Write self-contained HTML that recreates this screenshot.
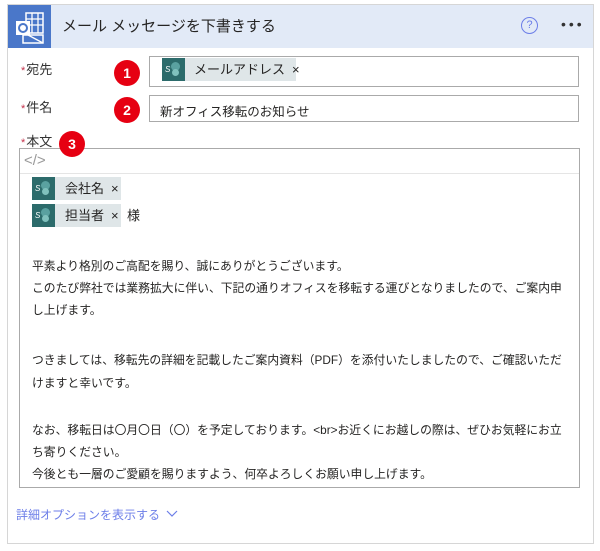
<!DOCTYPE html>
<html><head><meta charset="utf-8"><style>
*{margin:0;padding:0;box-sizing:border-box}
body{width:600px;height:551px;background:#fff;font-family:"Liberation Sans","Noto Sans CJK JP",sans-serif;color:#252423;position:relative;overflow:hidden}
.abs{position:absolute}
.card{left:7px;top:4px;width:587px;height:540px;border:1px solid #d6d6d6}
.hdr{left:8px;top:5px;width:585px;height:43px;background:#e2eaf7}
.logo{left:8px;top:5px;width:43px;height:43px;background:#4a77c9}
.lbl{font-size:13px;color:#333;line-height:16px}
.lbl b{color:#c4314b;font-weight:normal;font-size:11px;vertical-align:middle;margin-right:1px}
.box{border:1px solid #aaa;background:#fff}
.badge{width:26px;height:26px;border-radius:50%;background:#e60012;color:#fff;font-weight:bold;font-size:14px;text-align:center;line-height:26px}
.chip{height:23px;background:#dfe6e8;font-size:13px;line-height:23px;white-space:nowrap}
.chip i{display:inline-block;width:23px;height:23px;background:#2c6b6b;vertical-align:top;position:relative}
.chip i:before{content:"";position:absolute;left:9px;top:4px;width:9px;height:9px;border-radius:50%;background:#5aa1a0}
.chip i:after{content:"";position:absolute;left:10px;top:11px;width:7px;height:7px;border-radius:50%;background:#80c1bd}
.chip span.s{position:absolute;left:3px;top:0;font-size:8px;color:#fff;line-height:23px}
.t{font-size:11.8px;left:32px;white-space:nowrap;color:#252423}
</style></head><body>
<div class="abs card"></div>
<div class="abs hdr"></div>
<div class="abs logo">
<svg width="43" height="43" viewBox="0 0 43 43"><rect x="18" y="8" width="17" height="20" fill="none" stroke="#fff" stroke-width="1.5"/><path d="M18 14H35M18 20H35M24 8V28M30 8V28" stroke="#fff" stroke-width="1.3"/><path d="M15 30L35 30L35 38L15 38Z" fill="none" stroke="#fff" stroke-width="1.5"/><path d="M20 30L35 38" stroke="#fff" stroke-width="1.3"/><rect x="8" y="16" width="14" height="14" fill="#fff"/><circle cx="15" cy="23" r="4" fill="none" stroke="#4a77c9" stroke-width="2"/></svg>
</div>
<div class="abs" style="left:62px;top:15px;font-size:15px;color:#252423">メール メッセージを下書きする</div>
<div class="abs" style="left:521px;top:17px;width:17px;height:17px;border:1.5px solid #6c7ee8;border-radius:50%;color:#6c7ee8;font-size:11px;text-align:center;line-height:14px">?</div>
<div class="abs" style="left:561px;top:19px;font-size:14px;letter-spacing:3px;color:#333;line-height:10px">•••</div>

<div class="abs lbl" style="left:21px;top:62px"><b>*</b>宛先</div>
<div class="abs lbl" style="left:21px;top:100px"><b>*</b>件名</div>
<div class="abs lbl" style="left:21px;top:134px"><b>*</b>本文</div>

<div class="abs box" style="left:149px;top:56px;width:430px;height:31px"></div>
<div class="abs chip" style="left:162px;top:58px;width:134px"><i><span class="s">S</span></i><span style="margin-left:9px">メールアドレス</span><span style="margin-left:7px">×</span></div>
<div class="abs box" style="left:149px;top:95px;width:430px;height:27px"></div>
<div class="abs" style="left:160px;top:101px;font-size:12.5px">新オフィス移転のお知らせ</div>

<div class="abs box" style="left:19px;top:148px;width:561px;height:340px"></div>
<div class="abs" style="left:20px;top:173px;width:559px;height:1px;background:#e5e5e5"></div>
<div class="abs" style="left:24px;top:152px;font-size:15px;color:#999;font-family:'Liberation Sans',sans-serif;font-weight:300">&lt;/&gt;</div>
<div class="abs chip" style="left:32px;top:177px;width:89px"><i><span class="s">S</span></i><span style="margin-left:10px">会社名</span><span style="margin-left:7px">×</span></div>
<div class="abs chip" style="left:32px;top:204px;width:89px"><i><span class="s">S</span></i><span style="margin-left:10px">担当者</span><span style="margin-left:7px">×</span></div>
<div class="abs" style="left:127px;top:205px;font-size:13px">様</div>

<div class="abs t" style="top:257px">平素より格別のご高配を賜り、誠にありがとうございます。</div>
<div class="abs t" style="top:279px">このたび弊社では業務拡大に伴い、下記の通りオフィスを移転する運びとなりましたので、ご案内申</div>
<div class="abs t" style="top:301px">し上げます。</div>
<div class="abs t" style="top:351px">つきましては、移転先の詳細を記載したご案内資料（PDF）を添付いたしましたので、ご確認いただ</div>
<div class="abs t" style="top:374px">けますと幸いです。</div>
<div class="abs t" style="top:421px">なお、移転日は〇月〇日（〇）を予定しております。&lt;br&gt;お近くにお越しの際は、ぜひお気軽にお立</div>
<div class="abs t" style="top:443px">ち寄りください。</div>
<div class="abs t" style="top:465px">今後とも一層のご愛顧を賜りますよう、何卒よろしくお願い申し上げます。</div>

<div class="abs" style="left:16px;top:506px;font-size:12px;color:#6c7ee8">詳細オプションを表示する</div>
<svg class="abs" style="left:166px;top:509px" width="12" height="10"><path d="M1 2L6 7L11 2" fill="none" stroke="#6c7ee8" stroke-width="1.2"/></svg>

<div class="abs badge" style="left:114px;top:60px">1</div>
<div class="abs badge" style="left:114px;top:97px">2</div>
<div class="abs badge" style="left:59px;top:131px">3</div>
</body></html>
